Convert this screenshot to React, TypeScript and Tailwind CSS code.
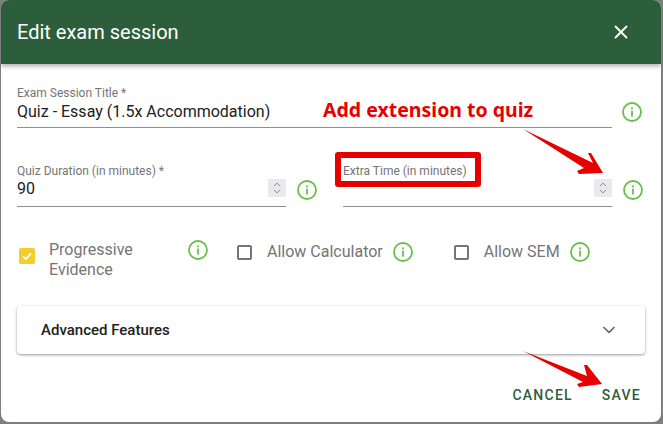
import { ChevronDown, ChevronUp, X } from "lucide-react";

function InfoIcon() {
    return (
        <svg width="20" height="20" viewBox="0 0 20 20" className="shrink-0" fill="none">
            <circle cx="10" cy="10" r="9" stroke="#6abf4b" strokeWidth="1.8" />
            <rect x="9.1" y="8.6" width="1.8" height="6" fill="#6abf4b" />
            <rect x="9.1" y="5.4" width="1.8" height="1.9" fill="#6abf4b" />
        </svg>
    );
}

function NumberField({ label, value }: { label: string; value?: string }) {
    return (
        <div className="flex w-[300px] items-end">
            <div className="relative h-[44px] w-[269px] border-b border-[#8f8f8f]">
                <div className="mt-[1px] text-[12px] leading-[14px] text-[#757575]">{label}</div>
                <div className="h-[22px] text-[16px] leading-[22px] text-[#212121]">{value}</div>
                <div className="absolute right-0 top-[16px] flex h-[18px] w-[18px] flex-col items-center justify-center bg-[#e8e8ee] text-[#666]">
                    <ChevronUp size={12} strokeWidth={1.6} className="-mb-[2px]" />
                    <ChevronDown size={12} strokeWidth={1.6} className="-mt-[2px]" />
                </div>
            </div>
            <div className="mb-[7px] ml-[11px]">
                <InfoIcon />
            </div>
        </div>
    );
}

function CheckOption({ label }: { label: string }) {
    return (
        <div className="flex items-center">
            <div className="h-[15px] w-[15px] rounded-[2px] border-2 border-[#757575]" />
            <span className="ml-[15px] text-[16px] text-[#757575]">{label}</span>
            <div className="ml-[10px]">
                <InfoIcon />
            </div>
        </div>
    );
}

export default function App() {
    return (
        <div className="h-[424px] w-[663px] bg-[#7e7e7e] pl-[1px] font-['Roboto',sans-serif]">
            <div className="relative h-[422px] w-[660px] overflow-hidden rounded-[8px] bg-white">
                <div className="flex h-[64px] items-center justify-between bg-[#2c5e3b] pl-[16px] pr-[29px] shadow-[0_2px_5px_rgba(0,0,0,0.35)]">
                    <h2 className="text-[20px] font-normal text-white">Edit exam session</h2>
                    <X size={22} strokeWidth={2} className="text-white" />
                </div>

                <div className="pl-[16px]">
                    <div className="mt-[21px] flex items-center">
                        <div className="h-[43px] w-[595px] border-b border-[#8f8f8f]">
                            <div className="text-[12px] leading-[16px] text-[#757575]">Exam Session Title *</div>
                            <div className="text-[16px] leading-[21px] text-[#212121]">Quiz - Essay (1.5x Accommodation)</div>
                        </div>
                        <div className="ml-[10px] mt-[11px]">
                            <InfoIcon />
                        </div>
                    </div>

                    <div className="mt-[35px] flex gap-[26px]">
                        <NumberField label="Quiz Duration (in minutes) *" value="90" />
                        <NumberField label="Extra Time (in minutes)" />
                    </div>

                    <div className="mt-[33px] flex items-start">
                        <div className="ml-[2px] mt-[8px] flex h-[16px] w-[16px] items-center justify-center rounded-[2px] bg-[#f4cc2e]">
                            <svg width="12" height="12" viewBox="0 0 12 12" fill="none">
                                <path d="M2 6.3 L4.8 9 L10 3.4" stroke="white" strokeWidth="1.7" />
                            </svg>
                        </div>
                        <div className="ml-[14px] w-[139px] text-[16px] leading-[20px] text-[#757575]">
                            Progressive
                            <br />
                            Evidence
                        </div>
                        <InfoIcon />
                        <div className="ml-[29px] flex gap-[41px]">
                            <CheckOption label="Allow Calculator" />
                            <CheckOption label="Allow SEM" />
                        </div>
                    </div>

                    <div className="mt-[26px] flex h-[48px] w-[628px] items-center justify-between rounded-[4px] bg-white pl-[24px] pr-[26px] shadow-[0_1px_3px_rgba(0,0,0,0.4)]">
                        <span className="text-[15px] font-medium text-[#212121]">Advanced Features</span>
                        <ChevronDown size={20} strokeWidth={2} className="text-[#666]" />
                    </div>

                    <div className="mt-[31px] flex justify-end gap-[29px] pr-[20px] text-[14px] font-medium leading-[20px] tracking-[1.25px] text-[#2c5e3b]">
                        <span>CANCEL</span>
                        <span>SAVE</span>
                    </div>
                </div>

                {/* annotation overlays */}
                <div className="absolute left-[322px] top-[97px] font-['Noto_Sans',sans-serif] text-[19.5px] font-bold leading-[26px] text-[#e60000]">
                    Add extension to quiz
                </div>
                <div className="absolute left-[334px] top-[152px] h-[35px] w-[146px] rounded-[3px] border-[6px] border-[#e60000]" />
                <svg className="absolute left-0 top-0" width="660" height="422" viewBox="0 0 660 422" fill="#e60000">
                    <path d="M522 129 L592 163 L587 153 L590 153 L602 173 L578 174 L576 171 L583 168 Z" />
                    <path d="M522 351 L586 376 L583 365 L586 365 L601 384 L578 387 L576 384 L582 382 Z" />
                </svg>
            </div>
        </div>
    );
}
